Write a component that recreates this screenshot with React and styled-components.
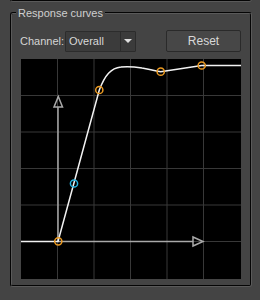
import React from 'react';
import styled, { createGlobalStyle } from 'styled-components';

const GlobalStyle = createGlobalStyle`
  html, body {
    margin: 0;
    padding: 0;
    background: #444444;
  }
  body {
    font-family: "Liberation Sans", Arial, sans-serif;
    font-size: 11px;
    color: #d4d4d4;
  }
`;

const Panel = styled.div`
  width: 260px;
  height: 300px;
  overflow: hidden;
  padding-left: 10px;
  box-sizing: border-box;
`;

// bottom edge of the group box above, scrolled mostly out of view
const PrevGroupTail = styled.div`
  width: 238px;
  height: 2px;
  margin-top: -2px;
  border: 2px groove #5a5a5a;
  border-top: none;
  border-radius: 0 0 3px 3px;
`;

const Group = styled.fieldset`
  width: 220px;
  margin: 4px 0 0 0;
  padding: 0 9px 6px 9px;
  border: 2px groove #5a5a5a;
  border-radius: 3px;
`;

const Legend = styled.legend`
  padding: 0 2px;
  margin-left: -5px;
  line-height: 14px;
  color: #cfcfcf;
`;

const ControlRow = styled.div`
  display: flex;
  align-items: center;
  margin-top: 10px;
  height: 22px;
`;

const Label = styled.span`
  margin-left: -1px;
  width: 45px;
  color: #d4d4d4;
`;

const Combo = styled.div`
  display: flex;
  width: 71px;
  height: 21px;
  box-sizing: border-box;
  border: 1px solid #2c2c2c;
  background: #3b3b3b;
  border-radius: 1px;
`;

const ComboValue = styled.div`
  flex: 1;
  display: flex;
  align-items: center;
  padding-left: 3px;
  color: #d8d8d8;
  border-right: 1px solid #2c2c2c;
`;

const ComboArrow = styled.div`
  width: 14px;
  display: flex;
  align-items: center;
  justify-content: center;
  &::after {
    content: "";
    border-left: 4px solid transparent;
    border-right: 4px solid transparent;
    border-top: 4px solid #e0e0e0;
  }
`;

const Button = styled.button`
  margin-left: auto;
  width: 75px;
  height: 22px;
  box-sizing: border-box;
  border: 1px solid #2a2a2a;
  border-radius: 2px;
  background: #474747;
  color: #d8d8d8;
  font-family: inherit;
  font-size: 12px;
  padding: 0;
`;

const Graph = styled.svg`
  display: block;
  margin-top: 7px;
  background: #000000;
`;

const gridStep = 36.5;
const gridLines = [1, 2, 3, 4, 5].map(i => i * gridStep);

const orange = '#eb9a22';
const cyan = '#27b2df';
const axis = '#a9a9a9';

const CurveGraph = () =>
    <Graph width="220" height="220" viewBox="0 0 220 220">
        {gridLines.map(p =>
            <g key={p} stroke="#383838" strokeWidth="1">
                <line x1={p} y1="0" x2={p} y2="220" />
                <line x1="0" y1={p} x2="220" y2={p} />
            </g>)}
        <g stroke={axis} strokeWidth="1.5" fill="none">
            <line x1="37" y1="182.5" x2="37" y2="48" />
            <polygon points="33,48 41.5,48 37.3,37.5" />
            <line x1="37" y1="182.5" x2="172" y2="182.5" />
            <polygon points="172,178 172,187 182,182.5" />
        </g>
        <path d="M0,182.5 L37,182.5 L78.3,31 C84,16 90,9 100,8 C108,7 115,8 121,9 C128,10 133,12 139.7,12.7 L180.7,6.5 L220,6.5"
              stroke="#f2f2f2" strokeWidth="1.5" fill="none" />
        <g fill="none" strokeWidth="1.5">
            <circle cx="37.3" cy="182.3" r="3.6" stroke={orange} />
            <circle cx="53" cy="124.5" r="3.6" stroke={cyan} />
            <circle cx="78.3" cy="31" r="3.6" stroke={orange} />
            <circle cx="139.7" cy="12.7" r="3.6" stroke={orange} />
            <circle cx="180.7" cy="6.5" r="3.6" stroke={orange} />
        </g>
    </Graph>;

export default function App() {
    return <>
        <GlobalStyle />
        <Panel>
            <PrevGroupTail />
            <Group>
                <Legend>Response curves</Legend>
                <ControlRow>
                    <Label>Channel:</Label>
                    <Combo>
                        <ComboValue>Overall</ComboValue>
                        <ComboArrow />
                    </Combo>
                    <Button>Reset</Button>
                </ControlRow>
                <CurveGraph />
            </Group>
        </Panel>
    </>;
}
